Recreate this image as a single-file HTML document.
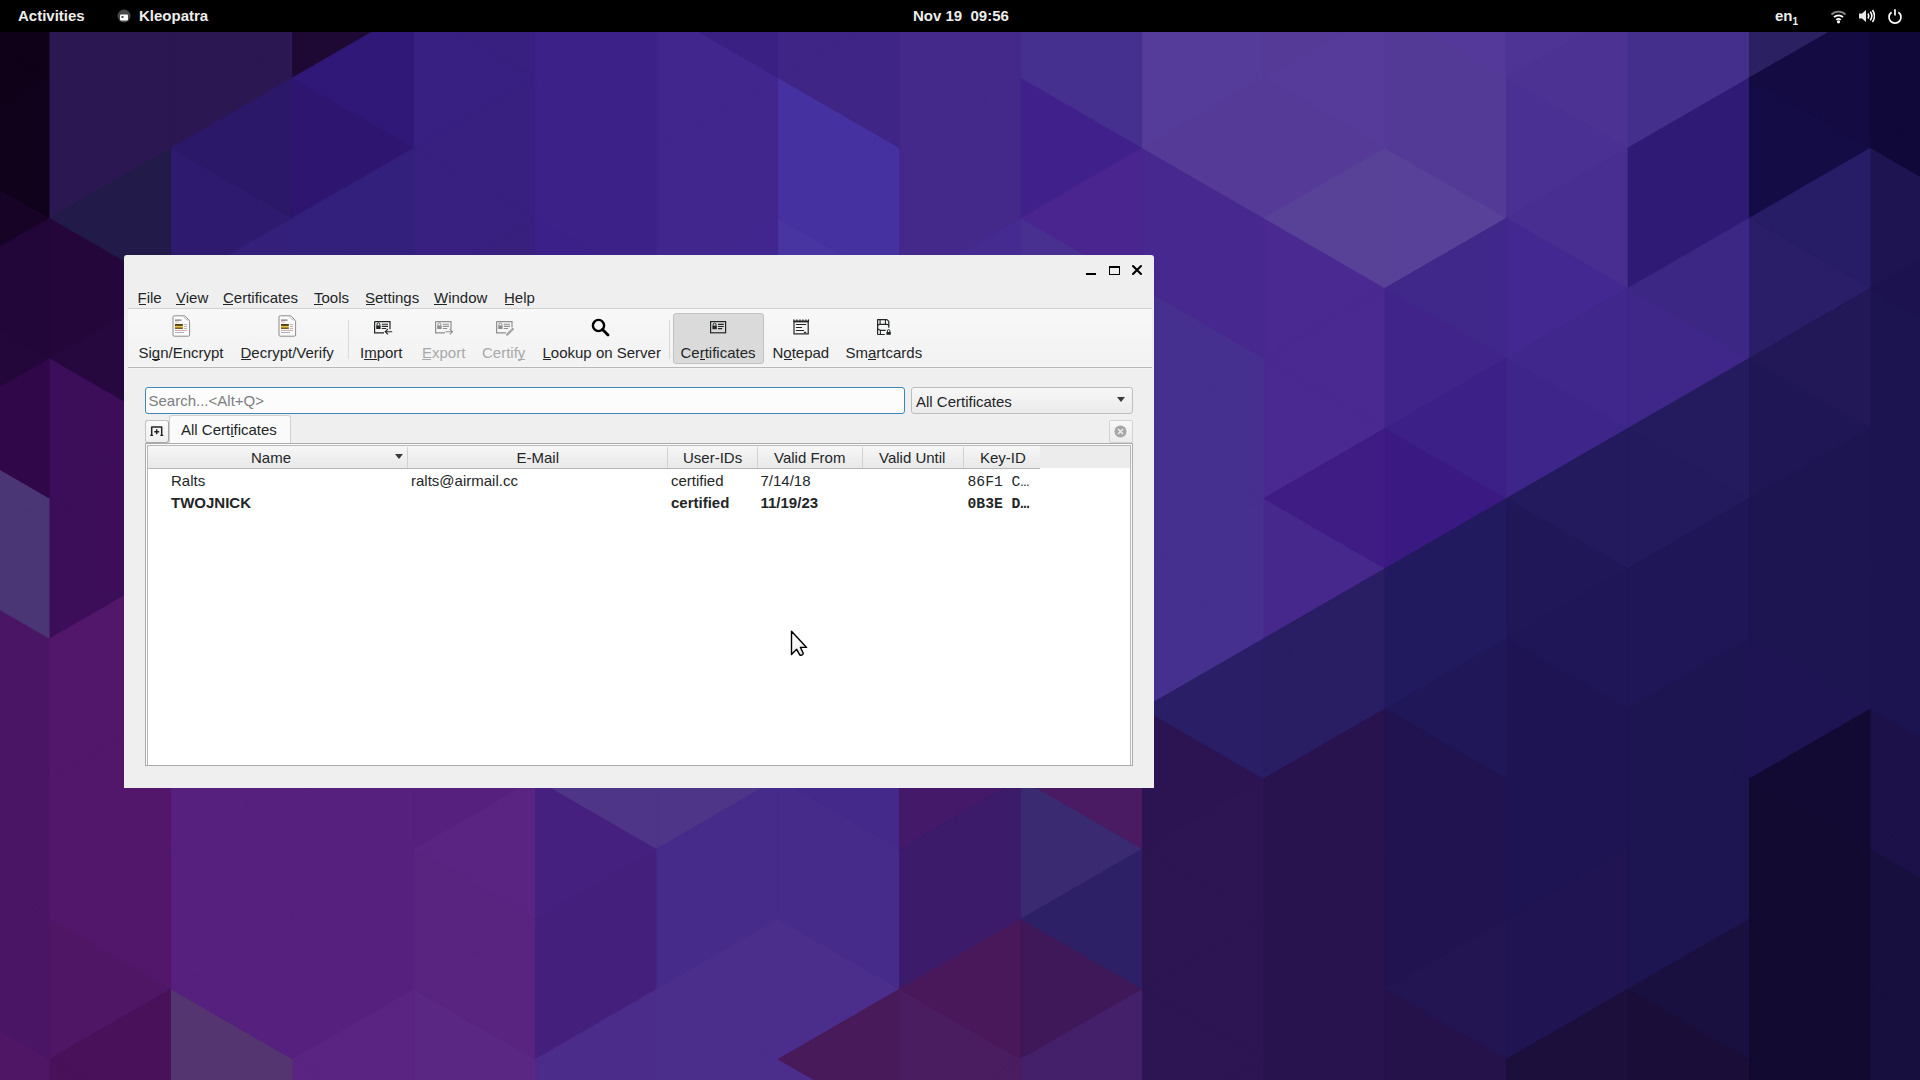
<!DOCTYPE html>
<html><head><meta charset="utf-8">
<style>
*{margin:0;padding:0;box-sizing:border-box}
html,body{width:1920px;height:1080px;overflow:hidden;background:#2a1a60}
body{position:relative;font-family:"Liberation Sans",sans-serif;}
#bg{position:absolute;left:0;top:0}
.a{position:absolute;white-space:nowrap}
#topbar{position:absolute;left:0;top:0;width:1920px;height:32px;background:#000;color:#eeeeec;font-weight:bold;font-size:15px}
#topbar .a{line-height:16px}
#win{position:absolute;left:124px;top:255px;width:1030px;height:533px;background:#efefef;border-radius:3px 3px 0 0;overflow:hidden;color:#232627;font-size:15px}
.t{position:absolute;white-space:nowrap;line-height:15px;height:15px}
.u{position:absolute;height:1px;background:#232627}
.dis{color:#a8a9aa}
.dis .u{background:#a8a9aa}
</style></head><body>
<svg id="bg" width="1920" height="1080" viewBox="0 0 1920 1080"><polygon points="-71.4,7.7 -71.4,147.9 50.0,77.8" fill="#0f0218" stroke="#0f0218" stroke-width="1"/><polygon points="-71.4,147.9 -71.4,288.1 50.0,218.0" fill="#170325" stroke="#170325" stroke-width="1"/><polygon points="-71.4,288.1 -71.4,428.3 50.0,358.2" fill="#23063a" stroke="#23063a" stroke-width="1"/><polygon points="-71.4,428.3 -71.4,568.5 50.0,498.4" fill="#4a3575" stroke="#4a3575" stroke-width="1"/><polygon points="-71.4,568.5 -71.4,708.7 50.0,638.6" fill="#4a1565" stroke="#4a1565" stroke-width="1"/><polygon points="-71.4,708.7 -71.4,848.9 50.0,778.8" fill="#4a1565" stroke="#4a1565" stroke-width="1"/><polygon points="-71.4,848.9 -71.4,989.1 50.0,919.0" fill="#4a1565" stroke="#4a1565" stroke-width="1"/><polygon points="-71.4,989.1 -71.4,1129.3 50.0,1059.2" fill="#4f1666" stroke="#4f1666" stroke-width="1"/><polygon points="50.0,-62.4 50.0,77.8 -71.4,7.7" fill="#0f0218" stroke="#0f0218" stroke-width="1"/><polygon points="50.0,77.8 50.0,218.0 -71.4,147.9" fill="#10021a" stroke="#10021a" stroke-width="1"/><polygon points="50.0,218.0 50.0,358.2 -71.4,288.1" fill="#22063a" stroke="#22063a" stroke-width="1"/><polygon points="50.0,358.2 50.0,498.4 -71.4,428.3" fill="#30084a" stroke="#30084a" stroke-width="1"/><polygon points="50.0,498.4 50.0,638.6 -71.4,568.5" fill="#4a3575" stroke="#4a3575" stroke-width="1"/><polygon points="50.0,638.6 50.0,778.8 -71.4,708.7" fill="#4a1565" stroke="#4a1565" stroke-width="1"/><polygon points="50.0,778.8 50.0,919.0 -71.4,848.9" fill="#4a1565" stroke="#4a1565" stroke-width="1"/><polygon points="50.0,919.0 50.0,1059.2 -71.4,989.1" fill="#4a1565" stroke="#4a1565" stroke-width="1"/><polygon points="50.0,1059.2 50.0,1199.4 -71.4,1129.3" fill="#4f1666" stroke="#4f1666" stroke-width="1"/><polygon points="50.0,-62.4 50.0,77.8 171.4,7.7" fill="#2b1852" stroke="#2b1852" stroke-width="1"/><polygon points="50.0,77.8 50.0,218.0 171.4,147.9" fill="#2b1852" stroke="#2b1852" stroke-width="1"/><polygon points="50.0,218.0 50.0,358.2 171.4,288.1" fill="#24063a" stroke="#24063a" stroke-width="1"/><polygon points="50.0,358.2 50.0,498.4 171.4,428.3" fill="#3c0e5a" stroke="#3c0e5a" stroke-width="1"/><polygon points="50.0,498.4 50.0,638.6 171.4,568.5" fill="#3c0e5a" stroke="#3c0e5a" stroke-width="1"/><polygon points="50.0,638.6 50.0,778.8 171.4,708.7" fill="#52176a" stroke="#52176a" stroke-width="1"/><polygon points="50.0,778.8 50.0,919.0 171.4,848.9" fill="#52176a" stroke="#52176a" stroke-width="1"/><polygon points="50.0,919.0 50.0,1059.2 171.4,989.1" fill="#4f1666" stroke="#4f1666" stroke-width="1"/><polygon points="50.0,1059.2 50.0,1199.4 171.4,1129.3" fill="#48115a" stroke="#48115a" stroke-width="1"/><polygon points="171.4,7.7 171.4,147.9 50.0,77.8" fill="#2b1852" stroke="#2b1852" stroke-width="1"/><polygon points="171.4,147.9 171.4,288.1 50.0,218.0" fill="#221a48" stroke="#221a48" stroke-width="1"/><polygon points="171.4,288.1 171.4,428.3 50.0,358.2" fill="#26073e" stroke="#26073e" stroke-width="1"/><polygon points="171.4,428.3 171.4,568.5 50.0,498.4" fill="#3c0e5a" stroke="#3c0e5a" stroke-width="1"/><polygon points="171.4,568.5 171.4,708.7 50.0,638.6" fill="#52176a" stroke="#52176a" stroke-width="1"/><polygon points="171.4,708.7 171.4,848.9 50.0,778.8" fill="#52176a" stroke="#52176a" stroke-width="1"/><polygon points="171.4,848.9 171.4,989.1 50.0,919.0" fill="#52176a" stroke="#52176a" stroke-width="1"/><polygon points="171.4,989.1 171.4,1129.3 50.0,1059.2" fill="#48115a" stroke="#48115a" stroke-width="1"/><polygon points="171.4,7.7 171.4,147.9 292.8,77.8" fill="#2b1852" stroke="#2b1852" stroke-width="1"/><polygon points="171.4,147.9 171.4,288.1 292.8,218.0" fill="#2e1a6e" stroke="#2e1a6e" stroke-width="1"/><polygon points="171.4,288.1 171.4,428.3 292.8,358.2" fill="#34207a" stroke="#34207a" stroke-width="1"/><polygon points="171.4,428.3 171.4,568.5 292.8,498.4" fill="#34207a" stroke="#34207a" stroke-width="1"/><polygon points="171.4,568.5 171.4,708.7 292.8,638.6" fill="#34207a" stroke="#34207a" stroke-width="1"/><polygon points="171.4,708.7 171.4,848.9 292.8,778.8" fill="#55207e" stroke="#55207e" stroke-width="1"/><polygon points="171.4,848.9 171.4,989.1 292.8,919.0" fill="#55207e" stroke="#55207e" stroke-width="1"/><polygon points="171.4,989.1 171.4,1129.3 292.8,1059.2" fill="#553570" stroke="#553570" stroke-width="1"/><polygon points="292.8,-62.4 292.8,77.8 171.4,7.7" fill="#2b1852" stroke="#2b1852" stroke-width="1"/><polygon points="292.8,77.8 292.8,218.0 171.4,147.9" fill="#2c1868" stroke="#2c1868" stroke-width="1"/><polygon points="292.8,218.0 292.8,358.2 171.4,288.1" fill="#34207a" stroke="#34207a" stroke-width="1"/><polygon points="292.8,358.2 292.8,498.4 171.4,428.3" fill="#34207a" stroke="#34207a" stroke-width="1"/><polygon points="292.8,498.4 292.8,638.6 171.4,568.5" fill="#34207a" stroke="#34207a" stroke-width="1"/><polygon points="292.8,638.6 292.8,778.8 171.4,708.7" fill="#55207e" stroke="#55207e" stroke-width="1"/><polygon points="292.8,778.8 292.8,919.0 171.4,848.9" fill="#55207e" stroke="#55207e" stroke-width="1"/><polygon points="292.8,919.0 292.8,1059.2 171.4,989.1" fill="#55207e" stroke="#55207e" stroke-width="1"/><polygon points="292.8,1059.2 292.8,1199.4 171.4,1129.3" fill="#553570" stroke="#553570" stroke-width="1"/><polygon points="292.8,-62.4 292.8,77.8 414.2,7.7" fill="#1e0935" stroke="#1e0935" stroke-width="1"/><polygon points="292.8,77.8 292.8,218.0 414.2,147.9" fill="#2e1670" stroke="#2e1670" stroke-width="1"/><polygon points="292.8,218.0 292.8,358.2 414.2,288.1" fill="#33207c" stroke="#33207c" stroke-width="1"/><polygon points="292.8,358.2 292.8,498.4 414.2,428.3" fill="#33207c" stroke="#33207c" stroke-width="1"/><polygon points="292.8,498.4 292.8,638.6 414.2,568.5" fill="#33207c" stroke="#33207c" stroke-width="1"/><polygon points="292.8,638.6 292.8,778.8 414.2,708.7" fill="#55207e" stroke="#55207e" stroke-width="1"/><polygon points="292.8,778.8 292.8,919.0 414.2,848.9" fill="#56207f" stroke="#56207f" stroke-width="1"/><polygon points="292.8,919.0 292.8,1059.2 414.2,989.1" fill="#56207f" stroke="#56207f" stroke-width="1"/><polygon points="292.8,1059.2 292.8,1199.4 414.2,1129.3" fill="#5a2582" stroke="#5a2582" stroke-width="1"/><polygon points="414.2,7.7 414.2,147.9 292.8,77.8" fill="#301878" stroke="#301878" stroke-width="1"/><polygon points="414.2,147.9 414.2,288.1 292.8,218.0" fill="#33207c" stroke="#33207c" stroke-width="1"/><polygon points="414.2,288.1 414.2,428.3 292.8,358.2" fill="#33207c" stroke="#33207c" stroke-width="1"/><polygon points="414.2,428.3 414.2,568.5 292.8,498.4" fill="#33207c" stroke="#33207c" stroke-width="1"/><polygon points="414.2,568.5 414.2,708.7 292.8,638.6" fill="#33207c" stroke="#33207c" stroke-width="1"/><polygon points="414.2,708.7 414.2,848.9 292.8,778.8" fill="#55207e" stroke="#55207e" stroke-width="1"/><polygon points="414.2,848.9 414.2,989.1 292.8,919.0" fill="#56207f" stroke="#56207f" stroke-width="1"/><polygon points="414.2,989.1 414.2,1129.3 292.8,1059.2" fill="#5a2582" stroke="#5a2582" stroke-width="1"/><polygon points="414.2,7.7 414.2,147.9 535.6,77.8" fill="#381f82" stroke="#381f82" stroke-width="1"/><polygon points="414.2,147.9 414.2,288.1 535.6,218.0" fill="#37207f" stroke="#37207f" stroke-width="1"/><polygon points="414.2,288.1 414.2,428.3 535.6,358.2" fill="#38207f" stroke="#38207f" stroke-width="1"/><polygon points="414.2,428.3 414.2,568.5 535.6,498.4" fill="#38207f" stroke="#38207f" stroke-width="1"/><polygon points="414.2,568.5 414.2,708.7 535.6,638.6" fill="#38207f" stroke="#38207f" stroke-width="1"/><polygon points="414.2,708.7 414.2,848.9 535.6,778.8" fill="#55207e" stroke="#55207e" stroke-width="1"/><polygon points="414.2,848.9 414.2,989.1 535.6,919.0" fill="#58247f" stroke="#58247f" stroke-width="1"/><polygon points="414.2,989.1 414.2,1129.3 535.6,1059.2" fill="#5a2783" stroke="#5a2783" stroke-width="1"/><polygon points="535.6,-62.4 535.6,77.8 414.2,7.7" fill="#37207f" stroke="#37207f" stroke-width="1"/><polygon points="535.6,77.8 535.6,218.0 414.2,147.9" fill="#37207f" stroke="#37207f" stroke-width="1"/><polygon points="535.6,218.0 535.6,358.2 414.2,288.1" fill="#38207f" stroke="#38207f" stroke-width="1"/><polygon points="535.6,358.2 535.6,498.4 414.2,428.3" fill="#38207f" stroke="#38207f" stroke-width="1"/><polygon points="535.6,498.4 535.6,638.6 414.2,568.5" fill="#38207f" stroke="#38207f" stroke-width="1"/><polygon points="535.6,638.6 535.6,778.8 414.2,708.7" fill="#55207e" stroke="#55207e" stroke-width="1"/><polygon points="535.6,778.8 535.6,919.0 414.2,848.9" fill="#5a2482" stroke="#5a2482" stroke-width="1"/><polygon points="535.6,919.0 535.6,1059.2 414.2,989.1" fill="#58247f" stroke="#58247f" stroke-width="1"/><polygon points="535.6,1059.2 535.6,1199.4 414.2,1129.3" fill="#5a2783" stroke="#5a2783" stroke-width="1"/><polygon points="535.6,-62.4 535.6,77.8 657.0,7.7" fill="#3c2188" stroke="#3c2188" stroke-width="1"/><polygon points="535.6,77.8 535.6,218.0 657.0,147.9" fill="#3c2188" stroke="#3c2188" stroke-width="1"/><polygon points="535.6,218.0 535.6,358.2 657.0,288.1" fill="#3c208a" stroke="#3c208a" stroke-width="1"/><polygon points="535.6,358.2 535.6,498.4 657.0,428.3" fill="#3c208a" stroke="#3c208a" stroke-width="1"/><polygon points="535.6,498.4 535.6,638.6 657.0,568.5" fill="#3c208a" stroke="#3c208a" stroke-width="1"/><polygon points="535.6,638.6 535.6,778.8 657.0,708.7" fill="#3c208a" stroke="#3c208a" stroke-width="1"/><polygon points="535.6,778.8 535.6,919.0 657.0,848.9" fill="#46207f" stroke="#46207f" stroke-width="1"/><polygon points="535.6,919.0 535.6,1059.2 657.0,989.1" fill="#451f7c" stroke="#451f7c" stroke-width="1"/><polygon points="535.6,1059.2 535.6,1199.4 657.0,1129.3" fill="#4c2c8a" stroke="#4c2c8a" stroke-width="1"/><polygon points="657.0,7.7 657.0,147.9 535.6,77.8" fill="#3c2188" stroke="#3c2188" stroke-width="1"/><polygon points="657.0,147.9 657.0,288.1 535.6,218.0" fill="#3c2188" stroke="#3c2188" stroke-width="1"/><polygon points="657.0,288.1 657.0,428.3 535.6,358.2" fill="#3c208a" stroke="#3c208a" stroke-width="1"/><polygon points="657.0,428.3 657.0,568.5 535.6,498.4" fill="#3c208a" stroke="#3c208a" stroke-width="1"/><polygon points="657.0,568.5 657.0,708.7 535.6,638.6" fill="#3c208a" stroke="#3c208a" stroke-width="1"/><polygon points="657.0,708.7 657.0,848.9 535.6,778.8" fill="#4e3588" stroke="#4e3588" stroke-width="1"/><polygon points="657.0,848.9 657.0,989.1 535.6,919.0" fill="#451f7c" stroke="#451f7c" stroke-width="1"/><polygon points="657.0,989.1 657.0,1129.3 535.6,1059.2" fill="#4c2c8a" stroke="#4c2c8a" stroke-width="1"/><polygon points="657.0,7.7 657.0,147.9 778.4,77.8" fill="#41268e" stroke="#41268e" stroke-width="1"/><polygon points="657.0,147.9 657.0,288.1 778.4,218.0" fill="#41268e" stroke="#41268e" stroke-width="1"/><polygon points="657.0,288.1 657.0,428.3 778.4,358.2" fill="#41268f" stroke="#41268f" stroke-width="1"/><polygon points="657.0,428.3 657.0,568.5 778.4,498.4" fill="#41268f" stroke="#41268f" stroke-width="1"/><polygon points="657.0,568.5 657.0,708.7 778.4,638.6" fill="#41268f" stroke="#41268f" stroke-width="1"/><polygon points="657.0,708.7 657.0,848.9 778.4,778.8" fill="#4e3588" stroke="#4e3588" stroke-width="1"/><polygon points="657.0,848.9 657.0,989.1 778.4,919.0" fill="#472b8a" stroke="#472b8a" stroke-width="1"/><polygon points="657.0,989.1 657.0,1129.3 778.4,1059.2" fill="#4b2e8c" stroke="#4b2e8c" stroke-width="1"/><polygon points="778.4,-62.4 778.4,77.8 657.0,7.7" fill="#3a2082" stroke="#3a2082" stroke-width="1"/><polygon points="778.4,77.8 778.4,218.0 657.0,147.9" fill="#41268e" stroke="#41268e" stroke-width="1"/><polygon points="778.4,218.0 778.4,358.2 657.0,288.1" fill="#41268f" stroke="#41268f" stroke-width="1"/><polygon points="778.4,358.2 778.4,498.4 657.0,428.3" fill="#41268f" stroke="#41268f" stroke-width="1"/><polygon points="778.4,498.4 778.4,638.6 657.0,568.5" fill="#41268f" stroke="#41268f" stroke-width="1"/><polygon points="778.4,638.6 778.4,778.8 657.0,708.7" fill="#41268f" stroke="#41268f" stroke-width="1"/><polygon points="778.4,778.8 778.4,919.0 657.0,848.9" fill="#472b8a" stroke="#472b8a" stroke-width="1"/><polygon points="778.4,919.0 778.4,1059.2 657.0,989.1" fill="#4b2e8c" stroke="#4b2e8c" stroke-width="1"/><polygon points="778.4,1059.2 778.4,1199.4 657.0,1129.3" fill="#4b2e8c" stroke="#4b2e8c" stroke-width="1"/><polygon points="778.4,-62.4 778.4,77.8 899.8,7.7" fill="#3f2585" stroke="#3f2585" stroke-width="1"/><polygon points="778.4,77.8 778.4,218.0 899.8,147.9" fill="#4631a0" stroke="#4631a0" stroke-width="1"/><polygon points="778.4,218.0 778.4,358.2 899.8,288.1" fill="#4835a2" stroke="#4835a2" stroke-width="1"/><polygon points="778.4,358.2 778.4,498.4 899.8,428.3" fill="#4835a2" stroke="#4835a2" stroke-width="1"/><polygon points="778.4,498.4 778.4,638.6 899.8,568.5" fill="#4835a2" stroke="#4835a2" stroke-width="1"/><polygon points="778.4,638.6 778.4,778.8 899.8,708.7" fill="#4835a2" stroke="#4835a2" stroke-width="1"/><polygon points="778.4,778.8 778.4,919.0 899.8,848.9" fill="#472b8a" stroke="#472b8a" stroke-width="1"/><polygon points="778.4,919.0 778.4,1059.2 899.8,989.1" fill="#4b2e8c" stroke="#4b2e8c" stroke-width="1"/><polygon points="778.4,1059.2 778.4,1199.4 899.8,1129.3" fill="#4b2e8c" stroke="#4b2e8c" stroke-width="1"/><polygon points="899.8,7.7 899.8,147.9 778.4,77.8" fill="#3f2585" stroke="#3f2585" stroke-width="1"/><polygon points="899.8,147.9 899.8,288.1 778.4,218.0" fill="#4631a0" stroke="#4631a0" stroke-width="1"/><polygon points="899.8,288.1 899.8,428.3 778.4,358.2" fill="#4835a2" stroke="#4835a2" stroke-width="1"/><polygon points="899.8,428.3 899.8,568.5 778.4,498.4" fill="#4835a2" stroke="#4835a2" stroke-width="1"/><polygon points="899.8,568.5 899.8,708.7 778.4,638.6" fill="#4835a2" stroke="#4835a2" stroke-width="1"/><polygon points="899.8,708.7 899.8,848.9 778.4,778.8" fill="#44298a" stroke="#44298a" stroke-width="1"/><polygon points="899.8,848.9 899.8,989.1 778.4,919.0" fill="#472b8a" stroke="#472b8a" stroke-width="1"/><polygon points="899.8,989.1 899.8,1129.3 778.4,1059.2" fill="#481a5a" stroke="#481a5a" stroke-width="1"/><polygon points="899.8,7.7 899.8,147.9 1021.2,77.8" fill="#44298a" stroke="#44298a" stroke-width="1"/><polygon points="899.8,147.9 899.8,288.1 1021.2,218.0" fill="#44298a" stroke="#44298a" stroke-width="1"/><polygon points="899.8,288.1 899.8,428.3 1021.2,358.2" fill="#452b90" stroke="#452b90" stroke-width="1"/><polygon points="899.8,428.3 899.8,568.5 1021.2,498.4" fill="#452b90" stroke="#452b90" stroke-width="1"/><polygon points="899.8,568.5 899.8,708.7 1021.2,638.6" fill="#452b90" stroke="#452b90" stroke-width="1"/><polygon points="899.8,708.7 899.8,848.9 1021.2,778.8" fill="#44196a" stroke="#44196a" stroke-width="1"/><polygon points="899.8,848.9 899.8,989.1 1021.2,919.0" fill="#3b1b6a" stroke="#3b1b6a" stroke-width="1"/><polygon points="899.8,989.1 899.8,1129.3 1021.2,1059.2" fill="#4a1c60" stroke="#4a1c60" stroke-width="1"/><polygon points="1021.2,-62.4 1021.2,77.8 899.8,7.7" fill="#44298a" stroke="#44298a" stroke-width="1"/><polygon points="1021.2,77.8 1021.2,218.0 899.8,147.9" fill="#44298a" stroke="#44298a" stroke-width="1"/><polygon points="1021.2,218.0 1021.2,358.2 899.8,288.1" fill="#452b90" stroke="#452b90" stroke-width="1"/><polygon points="1021.2,358.2 1021.2,498.4 899.8,428.3" fill="#452b90" stroke="#452b90" stroke-width="1"/><polygon points="1021.2,498.4 1021.2,638.6 899.8,568.5" fill="#452b90" stroke="#452b90" stroke-width="1"/><polygon points="1021.2,638.6 1021.2,778.8 899.8,708.7" fill="#452b90" stroke="#452b90" stroke-width="1"/><polygon points="1021.2,778.8 1021.2,919.0 899.8,848.9" fill="#3b1b6a" stroke="#3b1b6a" stroke-width="1"/><polygon points="1021.2,919.0 1021.2,1059.2 899.8,989.1" fill="#48185a" stroke="#48185a" stroke-width="1"/><polygon points="1021.2,1059.2 1021.2,1199.4 899.8,1129.3" fill="#4a1c60" stroke="#4a1c60" stroke-width="1"/><polygon points="1021.2,-62.4 1021.2,77.8 1142.6,7.7" fill="#46308f" stroke="#46308f" stroke-width="1"/><polygon points="1021.2,77.8 1021.2,218.0 1142.6,147.9" fill="#40208a" stroke="#40208a" stroke-width="1"/><polygon points="1021.2,218.0 1021.2,358.2 1142.6,288.1" fill="#473090" stroke="#473090" stroke-width="1"/><polygon points="1021.2,358.2 1021.2,498.4 1142.6,428.3" fill="#4a2590" stroke="#4a2590" stroke-width="1"/><polygon points="1021.2,498.4 1021.2,638.6 1142.6,568.5" fill="#4a2590" stroke="#4a2590" stroke-width="1"/><polygon points="1021.2,638.6 1021.2,778.8 1142.6,708.7" fill="#4a2590" stroke="#4a2590" stroke-width="1"/><polygon points="1021.2,778.8 1021.2,919.0 1142.6,848.9" fill="#3a2a72" stroke="#3a2a72" stroke-width="1"/><polygon points="1021.2,919.0 1021.2,1059.2 1142.6,989.1" fill="#3e1858" stroke="#3e1858" stroke-width="1"/><polygon points="1021.2,1059.2 1021.2,1199.4 1142.6,1129.3" fill="#45206a" stroke="#45206a" stroke-width="1"/><polygon points="1142.6,7.7 1142.6,147.9 1021.2,77.8" fill="#46308f" stroke="#46308f" stroke-width="1"/><polygon points="1142.6,147.9 1142.6,288.1 1021.2,218.0" fill="#4a2590" stroke="#4a2590" stroke-width="1"/><polygon points="1142.6,288.1 1142.6,428.3 1021.2,358.2" fill="#4a2590" stroke="#4a2590" stroke-width="1"/><polygon points="1142.6,428.3 1142.6,568.5 1021.2,498.4" fill="#4a2590" stroke="#4a2590" stroke-width="1"/><polygon points="1142.6,568.5 1142.6,708.7 1021.2,638.6" fill="#4a2590" stroke="#4a2590" stroke-width="1"/><polygon points="1142.6,708.7 1142.6,848.9 1021.2,778.8" fill="#4a1a62" stroke="#4a1a62" stroke-width="1"/><polygon points="1142.6,848.9 1142.6,989.1 1021.2,919.0" fill="#2e2066" stroke="#2e2066" stroke-width="1"/><polygon points="1142.6,989.1 1142.6,1129.3 1021.2,1059.2" fill="#45206a" stroke="#45206a" stroke-width="1"/><polygon points="1142.6,7.7 1142.6,147.9 1264.0,77.8" fill="#563c9a" stroke="#563c9a" stroke-width="1"/><polygon points="1142.6,147.9 1142.6,288.1 1264.0,218.0" fill="#47288f" stroke="#47288f" stroke-width="1"/><polygon points="1142.6,288.1 1142.6,428.3 1264.0,358.2" fill="#46308f" stroke="#46308f" stroke-width="1"/><polygon points="1142.6,428.3 1142.6,568.5 1264.0,498.4" fill="#46308f" stroke="#46308f" stroke-width="1"/><polygon points="1142.6,568.5 1142.6,708.7 1264.0,638.6" fill="#46308f" stroke="#46308f" stroke-width="1"/><polygon points="1142.6,708.7 1142.6,848.9 1264.0,778.8" fill="#2c1452" stroke="#2c1452" stroke-width="1"/><polygon points="1142.6,848.9 1142.6,989.1 1264.0,919.0" fill="#2d1452" stroke="#2d1452" stroke-width="1"/><polygon points="1142.6,989.1 1142.6,1129.3 1264.0,1059.2" fill="#2d1452" stroke="#2d1452" stroke-width="1"/><polygon points="1264.0,-62.4 1264.0,77.8 1142.6,7.7" fill="#563c9a" stroke="#563c9a" stroke-width="1"/><polygon points="1264.0,77.8 1264.0,218.0 1142.6,147.9" fill="#563a98" stroke="#563a98" stroke-width="1"/><polygon points="1264.0,218.0 1264.0,358.2 1142.6,288.1" fill="#47288f" stroke="#47288f" stroke-width="1"/><polygon points="1264.0,358.2 1264.0,498.4 1142.6,428.3" fill="#46308f" stroke="#46308f" stroke-width="1"/><polygon points="1264.0,498.4 1264.0,638.6 1142.6,568.5" fill="#46308f" stroke="#46308f" stroke-width="1"/><polygon points="1264.0,638.6 1264.0,778.8 1142.6,708.7" fill="#2a1e66" stroke="#2a1e66" stroke-width="1"/><polygon points="1264.0,778.8 1264.0,919.0 1142.6,848.9" fill="#2d1452" stroke="#2d1452" stroke-width="1"/><polygon points="1264.0,919.0 1264.0,1059.2 1142.6,989.1" fill="#2d1452" stroke="#2d1452" stroke-width="1"/><polygon points="1264.0,1059.2 1264.0,1199.4 1142.6,1129.3" fill="#2d1452" stroke="#2d1452" stroke-width="1"/><polygon points="1264.0,-62.4 1264.0,77.8 1385.4,7.7" fill="#553a98" stroke="#553a98" stroke-width="1"/><polygon points="1264.0,77.8 1264.0,218.0 1385.4,147.9" fill="#553a98" stroke="#553a98" stroke-width="1"/><polygon points="1264.0,218.0 1264.0,358.2 1385.4,288.1" fill="#4a2990" stroke="#4a2990" stroke-width="1"/><polygon points="1264.0,358.2 1264.0,498.4 1385.4,428.3" fill="#4a2990" stroke="#4a2990" stroke-width="1"/><polygon points="1264.0,498.4 1264.0,638.6 1385.4,568.5" fill="#46288c" stroke="#46288c" stroke-width="1"/><polygon points="1264.0,638.6 1264.0,778.8 1385.4,708.7" fill="#291d64" stroke="#291d64" stroke-width="1"/><polygon points="1264.0,778.8 1264.0,919.0 1385.4,848.9" fill="#28134f" stroke="#28134f" stroke-width="1"/><polygon points="1264.0,919.0 1264.0,1059.2 1385.4,989.1" fill="#28134f" stroke="#28134f" stroke-width="1"/><polygon points="1264.0,1059.2 1264.0,1199.4 1385.4,1129.3" fill="#28134f" stroke="#28134f" stroke-width="1"/><polygon points="1385.4,7.7 1385.4,147.9 1264.0,77.8" fill="#563b9a" stroke="#563b9a" stroke-width="1"/><polygon points="1385.4,147.9 1385.4,288.1 1264.0,218.0" fill="#584298" stroke="#584298" stroke-width="1"/><polygon points="1385.4,288.1 1385.4,428.3 1264.0,358.2" fill="#4a2990" stroke="#4a2990" stroke-width="1"/><polygon points="1385.4,428.3 1385.4,568.5 1264.0,498.4" fill="#3f1c84" stroke="#3f1c84" stroke-width="1"/><polygon points="1385.4,568.5 1385.4,708.7 1264.0,638.6" fill="#291d64" stroke="#291d64" stroke-width="1"/><polygon points="1385.4,708.7 1385.4,848.9 1264.0,778.8" fill="#28134f" stroke="#28134f" stroke-width="1"/><polygon points="1385.4,848.9 1385.4,989.1 1264.0,919.0" fill="#28134f" stroke="#28134f" stroke-width="1"/><polygon points="1385.4,989.1 1385.4,1129.3 1264.0,1059.2" fill="#28134f" stroke="#28134f" stroke-width="1"/><polygon points="1385.4,7.7 1385.4,147.9 1506.8,77.8" fill="#533a97" stroke="#533a97" stroke-width="1"/><polygon points="1385.4,147.9 1385.4,288.1 1506.8,218.0" fill="#584299" stroke="#584299" stroke-width="1"/><polygon points="1385.4,288.1 1385.4,428.3 1506.8,358.2" fill="#40248a" stroke="#40248a" stroke-width="1"/><polygon points="1385.4,428.3 1385.4,568.5 1506.8,498.4" fill="#3a1a82" stroke="#3a1a82" stroke-width="1"/><polygon points="1385.4,568.5 1385.4,708.7 1506.8,638.6" fill="#221a5e" stroke="#221a5e" stroke-width="1"/><polygon points="1385.4,708.7 1385.4,848.9 1506.8,778.8" fill="#211350" stroke="#211350" stroke-width="1"/><polygon points="1385.4,848.9 1385.4,989.1 1506.8,919.0" fill="#211350" stroke="#211350" stroke-width="1"/><polygon points="1385.4,989.1 1385.4,1129.3 1506.8,1059.2" fill="#25124a" stroke="#25124a" stroke-width="1"/><polygon points="1506.8,-62.4 1506.8,77.8 1385.4,7.7" fill="#54399a" stroke="#54399a" stroke-width="1"/><polygon points="1506.8,77.8 1506.8,218.0 1385.4,147.9" fill="#523a96" stroke="#523a96" stroke-width="1"/><polygon points="1506.8,218.0 1506.8,358.2 1385.4,288.1" fill="#40288a" stroke="#40288a" stroke-width="1"/><polygon points="1506.8,358.2 1506.8,498.4 1385.4,428.3" fill="#3c2087" stroke="#3c2087" stroke-width="1"/><polygon points="1506.8,498.4 1506.8,638.6 1385.4,568.5" fill="#221a5e" stroke="#221a5e" stroke-width="1"/><polygon points="1506.8,638.6 1506.8,778.8 1385.4,708.7" fill="#1f1758" stroke="#1f1758" stroke-width="1"/><polygon points="1506.8,778.8 1506.8,919.0 1385.4,848.9" fill="#211350" stroke="#211350" stroke-width="1"/><polygon points="1506.8,919.0 1506.8,1059.2 1385.4,989.1" fill="#231452" stroke="#231452" stroke-width="1"/><polygon points="1506.8,1059.2 1506.8,1199.4 1385.4,1129.3" fill="#25124a" stroke="#25124a" stroke-width="1"/><polygon points="1506.8,-62.4 1506.8,77.8 1628.2,7.7" fill="#4e3595" stroke="#4e3595" stroke-width="1"/><polygon points="1506.8,77.8 1506.8,218.0 1628.2,147.9" fill="#4a3092" stroke="#4a3092" stroke-width="1"/><polygon points="1506.8,218.0 1506.8,358.2 1628.2,288.1" fill="#422890" stroke="#422890" stroke-width="1"/><polygon points="1506.8,358.2 1506.8,498.4 1628.2,428.3" fill="#3e2589" stroke="#3e2589" stroke-width="1"/><polygon points="1506.8,498.4 1506.8,638.6 1628.2,568.5" fill="#201759" stroke="#201759" stroke-width="1"/><polygon points="1506.8,638.6 1506.8,778.8 1628.2,708.7" fill="#1e1454" stroke="#1e1454" stroke-width="1"/><polygon points="1506.8,778.8 1506.8,919.0 1628.2,848.9" fill="#1e1454" stroke="#1e1454" stroke-width="1"/><polygon points="1506.8,919.0 1506.8,1059.2 1628.2,989.1" fill="#201552" stroke="#201552" stroke-width="1"/><polygon points="1506.8,1059.2 1506.8,1199.4 1628.2,1129.3" fill="#1c0f3c" stroke="#1c0f3c" stroke-width="1"/><polygon points="1628.2,7.7 1628.2,147.9 1506.8,77.8" fill="#4c3393" stroke="#4c3393" stroke-width="1"/><polygon points="1628.2,147.9 1628.2,288.1 1506.8,218.0" fill="#482e90" stroke="#482e90" stroke-width="1"/><polygon points="1628.2,288.1 1628.2,428.3 1506.8,358.2" fill="#40278c" stroke="#40278c" stroke-width="1"/><polygon points="1628.2,428.3 1628.2,568.5 1506.8,498.4" fill="#221a5c" stroke="#221a5c" stroke-width="1"/><polygon points="1628.2,568.5 1628.2,708.7 1506.8,638.6" fill="#1f1657" stroke="#1f1657" stroke-width="1"/><polygon points="1628.2,708.7 1628.2,848.9 1506.8,778.8" fill="#1e1454" stroke="#1e1454" stroke-width="1"/><polygon points="1628.2,848.9 1628.2,989.1 1506.8,919.0" fill="#201552" stroke="#201552" stroke-width="1"/><polygon points="1628.2,989.1 1628.2,1129.3 1506.8,1059.2" fill="#1c0f3c" stroke="#1c0f3c" stroke-width="1"/><polygon points="1628.2,7.7 1628.2,147.9 1749.6,77.8" fill="#44308c" stroke="#44308c" stroke-width="1"/><polygon points="1628.2,147.9 1628.2,288.1 1749.6,218.0" fill="#2f1a76" stroke="#2f1a76" stroke-width="1"/><polygon points="1628.2,288.1 1628.2,428.3 1749.6,358.2" fill="#3e2788" stroke="#3e2788" stroke-width="1"/><polygon points="1628.2,428.3 1628.2,568.5 1749.6,498.4" fill="#221a5c" stroke="#221a5c" stroke-width="1"/><polygon points="1628.2,568.5 1628.2,708.7 1749.6,638.6" fill="#1f1657" stroke="#1f1657" stroke-width="1"/><polygon points="1628.2,708.7 1628.2,848.9 1749.6,778.8" fill="#1d1452" stroke="#1d1452" stroke-width="1"/><polygon points="1628.2,848.9 1628.2,989.1 1749.6,919.0" fill="#1d1452" stroke="#1d1452" stroke-width="1"/><polygon points="1628.2,989.1 1628.2,1129.3 1749.6,1059.2" fill="#1a0e38" stroke="#1a0e38" stroke-width="1"/><polygon points="1749.6,-62.4 1749.6,77.8 1628.2,7.7" fill="#44308c" stroke="#44308c" stroke-width="1"/><polygon points="1749.6,77.8 1749.6,218.0 1628.2,147.9" fill="#2f1a76" stroke="#2f1a76" stroke-width="1"/><polygon points="1749.6,218.0 1749.6,358.2 1628.2,288.1" fill="#3c2784" stroke="#3c2784" stroke-width="1"/><polygon points="1749.6,358.2 1749.6,498.4 1628.2,428.3" fill="#231b5e" stroke="#231b5e" stroke-width="1"/><polygon points="1749.6,498.4 1749.6,638.6 1628.2,568.5" fill="#1f1657" stroke="#1f1657" stroke-width="1"/><polygon points="1749.6,638.6 1749.6,778.8 1628.2,708.7" fill="#1d1452" stroke="#1d1452" stroke-width="1"/><polygon points="1749.6,778.8 1749.6,919.0 1628.2,848.9" fill="#1d1452" stroke="#1d1452" stroke-width="1"/><polygon points="1749.6,919.0 1749.6,1059.2 1628.2,989.1" fill="#1a1040" stroke="#1a1040" stroke-width="1"/><polygon points="1749.6,1059.2 1749.6,1199.4 1628.2,1129.3" fill="#1a0e38" stroke="#1a0e38" stroke-width="1"/><polygon points="1749.6,-62.4 1749.6,77.8 1871.0,7.7" fill="#2a2062" stroke="#2a2062" stroke-width="1"/><polygon points="1749.6,77.8 1749.6,218.0 1871.0,147.9" fill="#140c45" stroke="#140c45" stroke-width="1"/><polygon points="1749.6,218.0 1749.6,358.2 1871.0,288.1" fill="#2a1e68" stroke="#2a1e68" stroke-width="1"/><polygon points="1749.6,358.2 1749.6,498.4 1871.0,428.3" fill="#1f1656" stroke="#1f1656" stroke-width="1"/><polygon points="1749.6,498.4 1749.6,638.6 1871.0,568.5" fill="#1d1452" stroke="#1d1452" stroke-width="1"/><polygon points="1749.6,638.6 1749.6,778.8 1871.0,708.7" fill="#1e1454" stroke="#1e1454" stroke-width="1"/><polygon points="1749.6,778.8 1749.6,919.0 1871.0,848.9" fill="#120a30" stroke="#120a30" stroke-width="1"/><polygon points="1749.6,919.0 1749.6,1059.2 1871.0,989.1" fill="#120a30" stroke="#120a30" stroke-width="1"/><polygon points="1749.6,1059.2 1749.6,1199.4 1871.0,1129.3" fill="#120a30" stroke="#120a30" stroke-width="1"/><polygon points="1871.0,7.7 1871.0,147.9 1749.6,77.8" fill="#130b42" stroke="#130b42" stroke-width="1"/><polygon points="1871.0,147.9 1871.0,288.1 1749.6,218.0" fill="#271c66" stroke="#271c66" stroke-width="1"/><polygon points="1871.0,288.1 1871.0,428.3 1749.6,358.2" fill="#221858" stroke="#221858" stroke-width="1"/><polygon points="1871.0,428.3 1871.0,568.5 1749.6,498.4" fill="#1d1452" stroke="#1d1452" stroke-width="1"/><polygon points="1871.0,568.5 1871.0,708.7 1749.6,638.6" fill="#1d1452" stroke="#1d1452" stroke-width="1"/><polygon points="1871.0,708.7 1871.0,848.9 1749.6,778.8" fill="#120a32" stroke="#120a32" stroke-width="1"/><polygon points="1871.0,848.9 1871.0,989.1 1749.6,919.0" fill="#120a30" stroke="#120a30" stroke-width="1"/><polygon points="1871.0,989.1 1871.0,1129.3 1749.6,1059.2" fill="#120a30" stroke="#120a30" stroke-width="1"/><polygon points="1871.0,7.7 1871.0,147.9 1992.4,77.8" fill="#100838" stroke="#100838" stroke-width="1"/><polygon points="1871.0,147.9 1871.0,288.1 1992.4,218.0" fill="#1e1452" stroke="#1e1452" stroke-width="1"/><polygon points="1871.0,288.1 1871.0,428.3 1992.4,358.2" fill="#1c1450" stroke="#1c1450" stroke-width="1"/><polygon points="1871.0,428.3 1871.0,568.5 1992.4,498.4" fill="#1c1450" stroke="#1c1450" stroke-width="1"/><polygon points="1871.0,568.5 1871.0,708.7 1992.4,638.6" fill="#1c1450" stroke="#1c1450" stroke-width="1"/><polygon points="1871.0,708.7 1871.0,848.9 1992.4,778.8" fill="#1c1148" stroke="#1c1148" stroke-width="1"/><polygon points="1871.0,848.9 1871.0,989.1 1992.4,919.0" fill="#170f3d" stroke="#170f3d" stroke-width="1"/><polygon points="1871.0,989.1 1871.0,1129.3 1992.4,1059.2" fill="#170f3d" stroke="#170f3d" stroke-width="1"/><polygon points="1992.4,-62.4 1992.4,77.8 1871.0,7.7" fill="#100838" stroke="#100838" stroke-width="1"/><polygon points="1992.4,77.8 1992.4,218.0 1871.0,147.9" fill="#100838" stroke="#100838" stroke-width="1"/><polygon points="1992.4,218.0 1992.4,358.2 1871.0,288.1" fill="#1c1250" stroke="#1c1250" stroke-width="1"/><polygon points="1992.4,358.2 1992.4,498.4 1871.0,428.3" fill="#1c1450" stroke="#1c1450" stroke-width="1"/><polygon points="1992.4,498.4 1992.4,638.6 1871.0,568.5" fill="#1c1450" stroke="#1c1450" stroke-width="1"/><polygon points="1992.4,638.6 1992.4,778.8 1871.0,708.7" fill="#1c1450" stroke="#1c1450" stroke-width="1"/><polygon points="1992.4,778.8 1992.4,919.0 1871.0,848.9" fill="#1c1148" stroke="#1c1148" stroke-width="1"/><polygon points="1992.4,919.0 1992.4,1059.2 1871.0,989.1" fill="#170f3d" stroke="#170f3d" stroke-width="1"/><polygon points="1992.4,1059.2 1992.4,1199.4 1871.0,1129.3" fill="#170f3d" stroke="#170f3d" stroke-width="1"/></svg>
<div id="topbar">
  <div class="a" style="left:18px;top:8px">Activities</div>
  <svg class="a" style="left:117px;top:9px" width="14" height="14" viewBox="0 0 14 14"><circle cx="7" cy="7" r="6.5" fill="#4a4a4a"/><rect x="3" y="5.5" width="8" height="6" rx="1" fill="#fff"/><rect x="4.5" y="7" width="2" height="2" fill="#4a4a4a"/></svg>
  <div class="a" style="left:139px;top:8px">Kleopatra</div>
  <div class="a" style="left:913px;top:8px">Nov 19&nbsp;&nbsp;09:56</div>
  <div class="a" style="left:1775px;top:8px">en<span style="font-size:10px;position:relative;top:4px">1</span></div>
  <svg class="a" style="left:1830px;top:9px" width="17" height="15" viewBox="0 0 17 15"><path d="M1.5 5.5 A10 10 0 0 1 15.5 5.5" stroke="#888" stroke-width="1.8" fill="none"/><path d="M4 8.2 A6.5 6.5 0 0 1 13 8.2" stroke="#fff" stroke-width="1.8" fill="none"/><path d="M6.3 10.8 A3.3 3.3 0 0 1 10.7 10.8" stroke="#fff" stroke-width="1.8" fill="none"/><circle cx="8.5" cy="12.8" r="1.6" fill="#fff"/></svg>
  <svg class="a" style="left:1858px;top:8px" width="17" height="16" viewBox="0 0 17 16"><path d="M1 5.5h3l4-3.5v12l-4-3.5h-3z" fill="#e8e8e8"/><path d="M10 5.5q1.5 2.5 0 5" stroke="#fff" stroke-width="1.6" fill="none"/><path d="M12.3 3.8q3 4.2 0 8.4" stroke="#fff" stroke-width="1.6" fill="none"/><path d="M14.5 2q4 6 0 12" stroke="#fff" stroke-width="1.5" fill="none"/></svg>
  <svg class="a" style="left:1887px;top:8px" width="16" height="16" viewBox="0 0 16 16"><path d="M4.6 4.2 A6 6 0 1 0 11.4 4.2" stroke="#fff" stroke-width="1.7" fill="none"/><path d="M8 1.2v6.3" stroke="#fff" stroke-width="1.7"/></svg>
</div>

<div id="win">
  <!-- title buttons -->
  <div class="a" style="left:962px;top:18px;width:10px;height:2.2px;background:#000"></div>
  <div class="a" style="left:985px;top:11px;width:11px;height:9px;border:1.5px solid #000;border-top-width:2.5px"></div>
  <svg class="a" style="left:1007px;top:9px" width="12" height="12" viewBox="0 0 12 12"><path d="M2 2L10 10M10 2L2 10" stroke="#000" stroke-width="2.1" stroke-linecap="round"/></svg>

  <!-- menubar -->
  <div class="t" style="left:13.5px;top:35px">File<div class="u" style="left:1px;top:14px;width:7px"></div></div>
  <div class="t" style="left:52px;top:35px">View<div class="u" style="left:0px;top:14px;width:9px"></div></div>
  <div class="t" style="left:99px;top:35px">Certificates<div class="u" style="left:0px;top:14px;width:10px"></div></div>
  <div class="t" style="left:190px;top:35px">Tools<div class="u" style="left:0px;top:14px;width:9px"></div></div>
  <div class="t" style="left:241px;top:35px">Settings<div class="u" style="left:1px;top:14px;width:9px"></div></div>
  <div class="t" style="left:310px;top:35px">Window<div class="u" style="left:0px;top:14px;width:13px"></div></div>
  <div class="t" style="left:380px;top:35px">Help<div class="u" style="left:1px;top:14px;width:9px"></div></div>
  <div class="a" style="left:4px;top:53px;width:1024px;height:1px;background:#d2d2d2"></div>
  <div class="a" style="left:4px;top:54px;width:1024px;height:58px;background:linear-gradient(#f8f8f8,#f2f2f2)"></div>

  <!-- toolbar -->
  <div class="a" style="left:549px;top:58px;width:91px;height:51px;background:#dadada;border:1px solid #c2c2c2;border-radius:3px"></div>
  <!-- doc icons -->
  <svg class="a" style="left:48px;top:60px" width="19" height="22" viewBox="0 0 19 22"><path d="M2.2 .8h9.8q.9 0 1.6.7l3.4 3.6q.6.6.6 1.5v13.4q0 1.2-1.2 1.2h-14.2q-1.2 0-1.2-1.2v-18q0-1.2 1.2-1.2z" fill="#fbfbfb" stroke="#8c8c8c" stroke-width="1"/><path d="M12 1.5q.5 3 4.5 4" fill="none" stroke="#b0b0b0" stroke-width=".8"/><rect x="3" y="4.6" width="6.5" height="1" fill="#5a5a5a"/><rect x="3" y="6.6" width="4" height=".8" fill="#d0a0a0"/><rect x="3" y="9" width="7.8" height="4.8" fill="#e8c040"/><rect x="3" y="9" width="7.8" height="1.8" fill="#4a3a18"/><rect x="3" y="12.6" width="7.8" height="1.2" fill="#5a4418"/><rect x="12" y="9.2" width="3" height=".8" fill="#a8a8a8"/><rect x="12" y="11.2" width="3" height=".8" fill="#a8a8a8"/><rect x="12" y="13.2" width="3" height=".8" fill="#a8a8a8"/><rect x="3" y="15.2" width="12" height=".8" fill="#d89a9a"/><rect x="3" y="17.2" width="9" height=".8" fill="#9aa0b0"/></svg>
  <svg class="a" style="left:154px;top:60px" width="19" height="22" viewBox="0 0 19 22"><path d="M2.2 .8h9.8q.9 0 1.6.7l3.4 3.6q.6.6.6 1.5v13.4q0 1.2-1.2 1.2h-14.2q-1.2 0-1.2-1.2v-18q0-1.2 1.2-1.2z" fill="#fbfbfb" stroke="#8c8c8c" stroke-width="1"/><path d="M12 1.5q.5 3 4.5 4" fill="none" stroke="#b0b0b0" stroke-width=".8"/><rect x="3" y="4.6" width="6.5" height="1" fill="#5a5a5a"/><rect x="3" y="6.6" width="4" height=".8" fill="#d0a0a0"/><rect x="3" y="9" width="7.8" height="4.8" fill="#e8c040"/><rect x="3" y="9" width="7.8" height="1.8" fill="#4a3a18"/><rect x="3" y="12.6" width="7.8" height="1.2" fill="#5a4418"/><rect x="12" y="9.2" width="3" height=".8" fill="#a8a8a8"/><rect x="12" y="11.2" width="3" height=".8" fill="#a8a8a8"/><rect x="12" y="13.2" width="3" height=".8" fill="#a8a8a8"/><rect x="3" y="15.2" width="12" height=".8" fill="#d89a9a"/><rect x="3" y="17.2" width="9" height=".8" fill="#9aa0b0"/></svg>
  <!-- card icons -->
  <svg class="a" style="left:250px;top:66px" width="19" height="15" viewBox="0 0 19 15"><path d="M.6 .6h15.4v7.6" fill="none" stroke="#232627" stroke-width="1.2"/><path d="M.6 .6v11.2h9.4" fill="none" stroke="#232627" stroke-width="1.2"/><rect x="2.2" y="4.4" width="4.4" height="3.6" fill="#232627"/><path d="M3 4.6v-1.3a1.4 1.4 0 0 1 2.8 0v1.3" stroke="#232627" fill="none" stroke-width="1"/><path d="M7.8 3.3h6.2M7.8 5.4h6.2M7.8 7.5h4.4" stroke="#232627" stroke-width="1.1"/><path d="M11.2 10.7h7M14 8l-2.8 2.7 2.8 2.7" stroke="#232627" stroke-width="1.1" fill="none"/></svg>
  <svg class="a" style="left:311px;top:66px" width="19" height="15" viewBox="0 0 19 15"><path d="M.6 .6h15.4v7.6" fill="none" stroke="#8e8f90" stroke-width="1.2"/><path d="M.6 .6v11.2h9.4" fill="none" stroke="#8e8f90" stroke-width="1.2"/><rect x="2.2" y="4.4" width="4.4" height="3.6" fill="#8e8f90"/><path d="M3 4.6v-1.3a1.4 1.4 0 0 1 2.8 0v1.3" stroke="#8e8f90" fill="none" stroke-width="1"/><path d="M7.8 3.3h6.2M7.8 5.4h6.2M7.8 7.5h4.4" stroke="#8e8f90" stroke-width="1.1"/><path d="M10.5 10.7h7M14.7 8l2.8 2.7-2.8 2.7" stroke="#8e8f90" stroke-width="1.1" fill="none"/></svg>
  <svg class="a" style="left:372px;top:66px" width="19" height="15" viewBox="0 0 19 15"><path d="M.6 .6h15.4v6" fill="none" stroke="#8e8f90" stroke-width="1.2"/><path d="M.6 .6v11.2h9.4" fill="none" stroke="#8e8f90" stroke-width="1.2"/><rect x="2.2" y="4.4" width="4.4" height="3.6" fill="#8e8f90"/><path d="M3 4.6v-1.3a1.4 1.4 0 0 1 2.8 0v1.3" stroke="#8e8f90" fill="none" stroke-width="1"/><path d="M7.8 3.3h6.2M7.8 5.4h6.2M7.8 7.5h4.4" stroke="#8e8f90" stroke-width="1.1"/><path d="M11.2 13.6l5.6-5.6" stroke="#a5a6a7" stroke-width="2.4" stroke-linecap="round"/></svg>
  <!-- search icon -->
  <svg class="a" style="left:467px;top:63px" width="19" height="19" viewBox="0 0 19 19"><circle cx="7.5" cy="7.5" r="5.6" stroke="#000" stroke-width="2.4" fill="none"/><path d="M11.5 11.5l5.5 5.5" stroke="#000" stroke-width="2.8" stroke-linecap="round"/></svg>
  <!-- certificates icon -->
  <svg class="a" style="left:586px;top:66px" width="17" height="13" viewBox="0 0 17 13"><rect x=".6" y=".6" width="15" height="11.2" fill="none" stroke="#232627" stroke-width="1.2"/><rect x="2.4" y="4.6" width="4.4" height="3.6" fill="#232627"/><path d="M3.2 4.8v-1.3a1.4 1.4 0 0 1 2.8 0v1.3" stroke="#232627" fill="none" stroke-width="1"/><path d="M8 3.4h5.8M8 5.5h5.8M8 7.6h4.2" stroke="#232627" stroke-width="1.1"/></svg>
  <!-- notepad icon -->
  <svg class="a" style="left:669px;top:64px" width="17" height="17" viewBox="0 0 17 17"><rect x="1" y="2.6" width="14.2" height="12.3" fill="none" stroke="#232627" stroke-width="1.2"/><path d="M.4 2.4h15.4" stroke="#232627" stroke-width="1.6"/><rect x="0.4" y=".3" width="1.1" height="1.8" rx=".4" fill="#232627"/><rect x="3.4" y=".3" width="1.1" height="1.8" rx=".4" fill="#232627"/><rect x="6.4" y=".3" width="1.1" height="1.8" rx=".4" fill="#232627"/><rect x="9.4" y=".3" width="1.1" height="1.8" rx=".4" fill="#232627"/><rect x="12.4" y=".3" width="1.1" height="1.8" rx=".4" fill="#232627"/><rect x="15.0" y=".3" width="1.1" height="1.8" rx=".4" fill="#232627"/><path d="M3.3 5.5h9.4M3.3 8.5h5.3M3.3 11.5h7.3M11.3 13.4h1.4" stroke="#232627" stroke-width="1.1" stroke-linecap="round"/></svg>
  <!-- smartcards icon -->
  <svg class="a" style="left:753px;top:64px" width="15" height="17" viewBox="0 0 15 17"><path d="M.6 15.5V.6h9.3l1.9 1.8v6.3" fill="none" stroke="#232627" stroke-width="1.2" stroke-linejoin="round"/><path d="M.6 15.5h7.2" stroke="#232627" stroke-width="1.2"/><path d="M3.1 .6v4.7M8.4 .6v4.7" stroke="#232627" stroke-width="1.1"/><path d="M.8 6.8Q1 5.4 2.4 5.4h7.6q1.6 0 1.8 1.6" fill="none" stroke="#232627" stroke-width="1.1"/><path d="M.8 9.3Q1 10.9 2.4 10.9h1" fill="none" stroke="#232627" stroke-width="1.1"/><path d="M3.4 10.9v4.6M3.4 11.4h5.3" stroke="#232627" stroke-width="1.1"/><rect x="9.4" y="13" width="4.4" height="2.8" fill="#232627"/><path d="M10.4 13.1v-1.3a1.2 1.2 0 0 1 2.4 0v1.3" fill="none" stroke="#232627" stroke-width="1"/></svg>

  <div class="t" style="left:14.5px;top:90px">Sign/Encrypt<div class="u" style="left:13.5px;top:14px;width:8px"></div></div>
  <div class="t" style="left:116.5px;top:90px">Decrypt/Verify<div class="u" style="left:0.5px;top:14px;width:10px"></div></div>
  <div class="a" style="left:224px;top:65px;width:1px;height:39px;background:#dadada"></div>
  <div class="t" style="left:236px;top:90px">Import<div class="u" style="left:4px;top:14px;width:12.5px"></div></div>
  <div class="t dis" style="left:298px;top:90px">Export<div class="u" style="left:0px;top:14px;width:9px"></div></div>
  <div class="t dis" style="left:358px;top:90px">Certify<div class="u" style="left:36px;top:14px;width:7px"></div></div>
  <div class="t" style="left:418.5px;top:90px">Lookup on Server<div class="u" style="left:0px;top:14px;width:8px"></div></div>
  <div class="a" style="left:545px;top:65px;width:1px;height:39px;background:#d8d8d8"></div>
  <div class="t" style="left:556.5px;top:90px">Certificates<div class="u" style="left:19.5px;top:14px;width:5px"></div></div>
  <div class="t" style="left:648.5px;top:90px">Notepad<div class="u" style="left:11px;top:14px;width:8px"></div></div>
  <div class="t" style="left:721.5px;top:90px">Smartcards<div class="u" style="left:22px;top:14px;width:8px"></div></div>
  <div class="a" style="left:4px;top:111px;width:1024px;height:1px;background:#f7f7f7"></div><div class="a" style="left:4px;top:112px;width:1024px;height:1px;background:#b6b6b6"></div><div class="a" style="left:4px;top:113px;width:1024px;height:1px;background:#f6f6f6"></div>

  <!-- search row -->
  <div class="a" style="left:21px;top:132px;width:760px;height:27px;background:#fcfcfc;border:1px solid #3c89b9;border-radius:3px"></div>
  <div class="t" style="left:24.5px;top:138px;color:#7d7e80">Search...&lt;Alt+Q&gt;</div>
  <div class="a" style="left:787px;top:132px;width:222px;height:27px;background:linear-gradient(#f7f7f7,#ebebeb);border:1px solid #bdbdbd;border-radius:3px"></div>
  <div class="t" style="left:792px;top:139px">All Certificates</div>
  <svg class="a" style="left:993px;top:142px" width="8" height="5" viewBox="0 0 8 5"><path d="M0 0h8l-4 5z" fill="#3a3a3a"/></svg>

  <!-- tab row -->
  <div class="a" style="left:21px;top:165px;width:24px;height:23px;background:linear-gradient(#fbfbfb,#efefef);border:1px solid #c4c4c4;border-right-color:#a9a9a9;border-bottom-color:#a9a9a9;border-radius:3px"></div>
  <svg class="a" style="left:26px;top:170px" width="14" height="12" viewBox="0 0 14 12"><path d="M1.7 10.2V1.9h10v8.3" fill="none" stroke="#232627" stroke-width="1.5" stroke-linejoin="round"/><path d="M6.7 4.3v5M4.2 6.8h5" stroke="#232627" stroke-width="1.5"/><path d="M.6 10.3h2M10.8 10.3h2" stroke="#232627" stroke-width="1.3" stroke-linecap="round"/></svg>
  <div class="a" style="left:45px;top:160px;width:122px;height:29px;background:#fafafa;border:1px solid #d0d0d0;border-bottom:none;border-radius:3px 3px 0 0"></div>
  <div class="t" style="left:57px;top:167px">All Certificates<div class="u" style="left:49.5px;top:14px;width:3.5px"></div></div>
  <div class="a" style="left:167px;top:188px;width:842px;height:1px;background:#cdcdcd"></div>
  <div class="a" style="left:985px;top:165px;width:24px;height:23px;background:linear-gradient(#f8f8f8,#ececec);border:1px solid #d2d2d2;border-radius:2px"></div>
  <svg class="a" style="left:990px;top:170px" width="13" height="13" viewBox="0 0 13 13"><circle cx="6.5" cy="6.5" r="6" fill="#a5a6a7"/><path d="M4 4l5 5M9 4l-5 5" stroke="#efefef" stroke-width="1.5"/></svg>

  <!-- tree view -->
  <div class="a" style="left:21px;top:188px;width:988px;height:323px;background:#fbfbfb;border:1px solid #ababab"></div>
  <div class="a" style="left:23px;top:190px;width:984px;height:320px;background:#fff;border:1px solid #b8b8b8;border-bottom:none"></div>
  <div class="a" style="left:24px;top:191px;width:982px;height:22px;background:#ececec"></div>
  <div class="a" style="left:24px;top:191px;width:892px;height:23px;background:linear-gradient(#f7f7f7,#e8e8e8);border-bottom:1px solid #b6b6b6"></div>
  <div class="a" style="left:283px;top:192px;width:1px;height:21px;background:#d2d2d2"></div>
  <div class="a" style="left:543px;top:192px;width:1px;height:21px;background:#d2d2d2"></div>
  <div class="a" style="left:633px;top:192px;width:1px;height:21px;background:#d2d2d2"></div>
  <div class="a" style="left:738px;top:192px;width:1px;height:21px;background:#d2d2d2"></div>
  <div class="a" style="left:839px;top:192px;width:1px;height:21px;background:#d2d2d2"></div>
  <div class="t" style="left:127px;top:195px">Name</div>
  <svg class="a" style="left:271px;top:199px" width="8" height="5" viewBox="0 0 8 5"><path d="M0 0h8l-4 5z" fill="#3a3a3a"/></svg>
  <div class="t" style="left:392.5px;top:195px">E-Mail</div>
  <div class="t" style="left:559px;top:195px">User-IDs</div>
  <div class="t" style="left:650px;top:195px">Valid From</div>
  <div class="t" style="left:755px;top:195px">Valid Until</div>
  <div class="t" style="left:856px;top:195px">Key-ID</div>

  <div class="t" style="left:47px;top:218px">Ralts</div>
  <div class="t" style="left:287px;top:218px">ralts@airmail.cc</div>
  <div class="t" style="left:547px;top:218px">certified</div>
  <div class="t" style="left:636.5px;top:218px">7/14/18</div>
  <div class="t" style="left:843.5px;top:219.5px;font-family:'Liberation Mono',monospace;font-size:14.7px">86F1 C…</div>
  <div class="t" style="left:47px;top:240px;font-weight:bold">TWOJNICK</div>
  <div class="t" style="left:547px;top:240px;font-weight:bold">certified</div>
  <div class="t" style="left:636.5px;top:240px;font-weight:bold">11/19/23</div>
  <div class="t" style="left:843.5px;top:241.5px;font-family:'Liberation Mono',monospace;font-size:14.7px;font-weight:bold">0B3E D…</div>
</div>

<!-- cursor -->
<svg class="a" style="left:789px;top:629px" width="22" height="30" viewBox="0 0 22 30"><defs><linearGradient id="cg" x1="0" y1="0" x2="1" y2="1"><stop offset="0" stop-color="#fff"/><stop offset=".6" stop-color="#f4f4f4"/><stop offset="1" stop-color="#c8c8c8"/></linearGradient></defs><path d="M2.5 2.3V25.5L7.6 20.2L10.4 25.4Q11.1 26.7 12.5 26.1L13.5 25.6Q14.6 25 14.1 23.8L11.4 18.4H17.6Z" fill="url(#cg)" stroke="#000" stroke-width="1.4" stroke-linejoin="round"/></svg>
</body></html>
